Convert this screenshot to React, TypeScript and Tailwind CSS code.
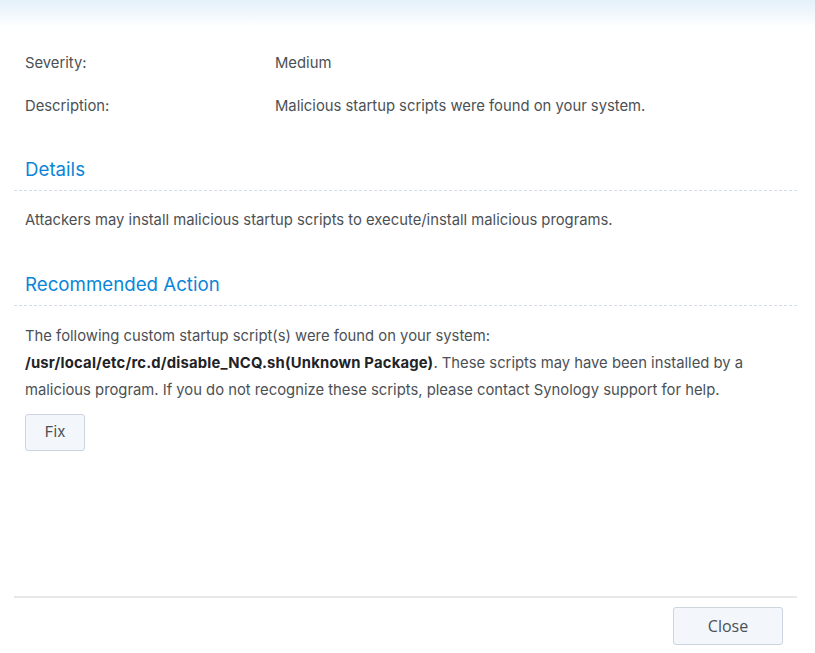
import React from 'react';

const Field: React.FC<{ label: string; value: string }> = ({ label, value }) => (
  <div className="flex h-[43px] items-center">
    <div className="w-[250px] shrink-0">{label}</div>
    <div>{value}</div>
  </div>
);

const Section: React.FC<{ title: string; children: React.ReactNode }> = ({ title, children }) => (
  <section>
    <h3 className="ml-[-11px] mr-[-7px] border-b border-dashed border-[#d5dde6] pl-[11px] pb-[7px] text-[18.7px] leading-[26px] text-[#0a86d8]">
      {title}
    </h3>
    {children}
  </section>
);

const App: React.FC = () => {
  return (
    <div
      className="flex h-[653px] w-[815px] flex-col bg-white text-[14.8px] text-[#4b5055]"
      style={{ fontFamily: 'Inter, "Noto Sans", sans-serif' }}
    >
      {/* header fade */}
      <div className="h-[28px] shrink-0 bg-gradient-to-b from-[#e4f0fa] to-white" />

      <main className="flex-1 pl-[25px] pr-[25px]">
        <div className="pt-[14px]">
          <Field label="Severity:" value="Medium" />
          <Field label="Description:" value="Malicious startup scripts were found on your system." />
        </div>

        <div className="mt-[29px]">
          <Section title="Details">
            <p className="mt-[17px] leading-[25px]">
              Attackers may install malicious startup scripts to execute/install malicious programs.
            </p>
          </Section>
        </div>

        <div className="mt-[39px]">
          <Section title="Recommended Action">
            <p className="mt-[17px] leading-[27px]">
              The following custom startup script(s) were found on your system:
              <br />
              <strong className="font-bold tracking-[0.2px] text-[#1f2327]">/usr/local/etc/rc.d/disable_NCQ.sh(Unknown Package)</strong>
              . These scripts may have been installed by a malicious program. If you do not recognize these
              scripts, please contact Synology support for help.
            </p>
            <button className="mt-[10px] h-[37px] w-[60px] rounded-[3px] border border-[#ccd5df] bg-[#f3f7fb] text-[15px] text-[#4b5055]">
              Fix
            </button>
          </Section>
        </div>
      </main>

      <footer className="ml-[14px] mr-[18px] flex h-[57px] shrink-0 items-start justify-end border-t-2 border-[#e6e8ea] pr-[14px] pt-[9px]">
        <button
          className="h-[38px] w-[110px] rounded-[3px] border border-[#ccd5df] bg-[#f3f7fb] text-[16px] text-[#4b5055]"
          style={{ fontFamily: '"Open Sans", sans-serif' }}
        >
          Close
        </button>
      </footer>
    </div>
  );
};

export default App;
